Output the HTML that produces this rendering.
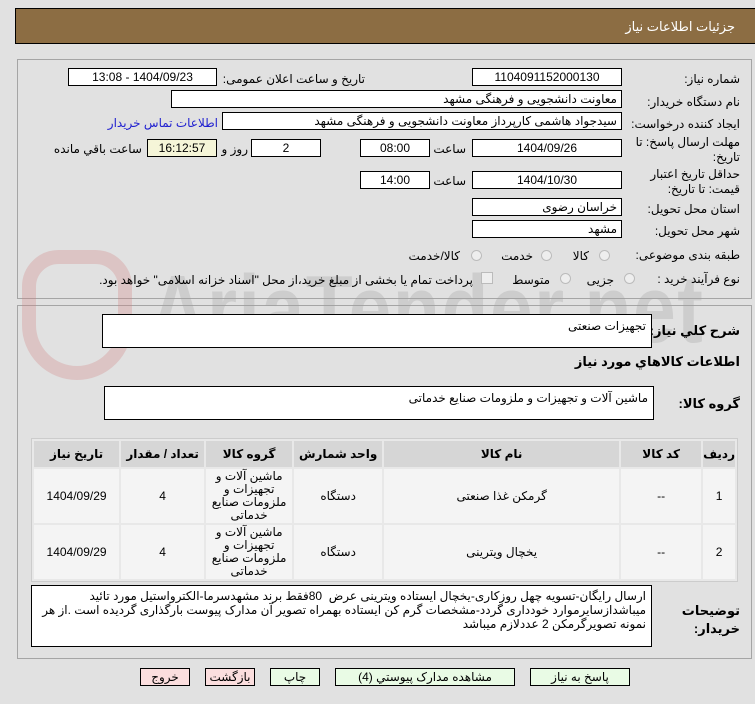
<!DOCTYPE html>
<html><head><meta charset="utf-8">
<style>
*{box-sizing:border-box;margin:0;padding:0}
body{width:755px;height:704px;background:#e1e1e1;font-family:Tahoma,"Liberation Sans","DejaVu Sans",sans-serif;font-size:12px;color:#000;position:relative;overflow:hidden}
.a{position:absolute;white-space:nowrap}
.hdr{left:15px;top:8px;width:745px;height:36px;background:#8c6d43;border:1px solid #000;color:#fff;font-size:13px}
.panel{position:absolute;border:1px solid #a5a5a5;background:#e1e1e1}
.f{position:absolute;background:#fff;border:1px solid #000;height:18px;line-height:16px;padding:0 4px;direction:rtl;text-align:right;white-space:nowrap}
.c{text-align:center}
.l{position:absolute;direction:rtl;text-align:right;white-space:nowrap}
.r{position:absolute;width:11px;height:11px;border-radius:50%;border:1px solid #bbb;background:#eee}
.ta{position:absolute;background:#fff;border:1px solid #000;direction:rtl;text-align:right;padding:3px 5px;line-height:16px}
table{position:absolute;left:31px;top:438px;width:707px;border-collapse:separate;border-spacing:2px;background:#e8e8e8;border:1px solid #ccc;direction:rtl}
th{background:#d6d6d6;height:26px;font-weight:bold;font-size:12px}
td{background:#f4f4f4;height:54px;text-align:center;line-height:13px}
.b{position:absolute;top:668px;height:18px;border:1px solid #000;background:#e9fbe5;text-align:center;line-height:16px;font-size:12px}
.pk{background:#fbdede}
.wm{position:absolute;left:150px;top:255px;font-size:96px;font-weight:bold;color:rgba(160,160,160,0.3);font-family:"Liberation Sans",sans-serif;letter-spacing:2px;transform:scaleX(0.8);transform-origin:left}
</style></head><body>
<div class="a hdr"><span style="position:absolute;right:24px;top:10px">جزئیات اطلاعات نیاز</span></div>

<div class="panel" style="left:17px;top:59px;width:735px;height:240px"></div>
<div class="panel" style="left:17px;top:305px;width:735px;height:354px"></div>

<div class="wm">AriaTender.net</div>
<div style="position:absolute;left:22px;top:250px;width:110px;height:130px;border:14px solid rgba(210,130,130,0.3);border-radius:40px 40px 60px 60px"></div>

<div class="l" style="right:15px;top:72px">شماره نیاز:</div>
<div class="f c" style="left:472px;top:68px;width:150px">1104091152000130</div>
<div class="l" style="right:390px;top:72px">تاریخ و ساعت اعلان عمومی:</div>
<div class="f c" style="left:68px;top:68px;width:149px">1404/09/23 - 13:08</div>

<div class="l" style="right:15px;top:95px">نام دستگاه خریدار:</div>
<div class="f" style="left:171px;top:90px;width:451px">معاونت دانشجویی و فرهنگی مشهد</div>

<div class="l" style="right:15px;top:117px">ایجاد کننده درخواست:</div>
<div class="f" style="left:222px;top:112px;width:400px">سیدجواد هاشمی کارپرداز معاونت دانشجویی و فرهنگی مشهد</div>
<div class="l" style="right:537px;top:116px;color:#2020d0">اطلاعات تماس خریدار</div>

<div class="l" style="right:15px;top:135px;line-height:15px">مهلت ارسال پاسخ: تا<br>تاریخ:</div>
<div class="f c" style="left:472px;top:139px;width:150px">1404/09/26</div>
<div class="l" style="right:289px;top:142px">ساعت</div>
<div class="f c" style="left:360px;top:139px;width:70px">08:00</div>
<div class="f c" style="left:251px;top:139px;width:70px">2</div>
<div class="l" style="right:507px;top:142px">روز و</div>
<div class="f c" style="left:147px;top:139px;width:70px;background:#f5f5d8">16:12:57</div>
<div class="l" style="right:613px;top:142px">ساعت باقي مانده</div>

<div class="l" style="right:15px;top:167px;line-height:15px">حداقل تاریخ اعتبار<br>قیمت: تا تاریخ:</div>
<div class="f c" style="left:472px;top:171px;width:150px">1404/10/30</div>
<div class="l" style="right:289px;top:174px">ساعت</div>
<div class="f c" style="left:360px;top:171px;width:70px">14:00</div>

<div class="l" style="right:15px;top:202px">استان محل تحویل:</div>
<div class="f" style="left:472px;top:198px;width:150px">خراسان رضوی</div>
<div class="l" style="right:15px;top:224px">شهر محل تحویل:</div>
<div class="f" style="left:472px;top:220px;width:150px">مشهد</div>

<div class="l" style="right:15px;top:248px">طبقه بندی موضوعی:</div>
<div class="r" style="left:599px;top:250px"></div><div class="l" style="right:166px;top:249px">کالا</div>
<div class="r" style="left:541px;top:250px"></div><div class="l" style="right:222px;top:249px">خدمت</div>
<div class="r" style="left:471px;top:250px"></div><div class="l" style="right:295px;top:249px">کالا/خدمت</div>

<div class="l" style="right:15px;top:272px">نوع فرآیند خرید :</div>
<div class="r" style="left:624px;top:273px"></div><div class="l" style="right:141px;top:273px">جزیی</div>
<div class="r" style="left:560px;top:273px"></div><div class="l" style="right:205px;top:273px">متوسط</div>
<div style="position:absolute;left:481px;top:272px;width:12px;height:12px;border:1px solid #bbb;background:#eee"></div>
<div class="l" style="right:282px;top:273px">پرداخت تمام یا بخشی از مبلغ خرید،از محل "اسناد خزانه اسلامی" خواهد بود.</div>

<div class="l" style="right:15px;top:323px;font-weight:bold;font-size:13px">شرح کلي نیاز:</div>
<div class="ta" style="left:102px;top:314px;width:550px;height:34px">تجهیزات صنعتی</div>
<div class="l" style="right:15px;top:354px;font-weight:bold;font-size:13px">اطلاعات کالاهاي مورد نیاز</div>
<div class="l" style="right:15px;top:396px;font-weight:bold;font-size:13px">گروه کالا:</div>
<div class="ta" style="left:104px;top:386px;width:550px;height:34px">ماشین آلات و تجهیزات و ملزومات صنایع خدماتی</div>

<table>
<tr><th style="width:27px">ردیف</th><th style="width:80px">کد کالا</th><th style="width:235px">نام کالا</th><th style="width:88px">واحد شمارش</th><th style="width:86px">گروه کالا</th><th style="width:83px">تعداد / مقدار</th><th>تاریخ نیاز</th></tr>
<tr><td>1</td><td>--</td><td>گرمکن غذا صنعتی</td><td>دستگاه</td><td>ماشین آلات و تجهیزات و ملزومات صنایع خدماتی</td><td>4</td><td>1404/09/29</td></tr>
<tr><td>2</td><td>--</td><td>یخچال ویترینی</td><td>دستگاه</td><td>ماشین آلات و تجهیزات و ملزومات صنایع خدماتی</td><td>4</td><td>1404/09/29</td></tr>
</table>

<div class="l" style="right:15px;top:602px;font-weight:bold;font-size:13px;line-height:18px">توضیحات<br>خریدار:</div>
<div class="ta" style="left:31px;top:585px;width:621px;height:62px;line-height:14px;white-space:normal">ارسال رایگان-تسویه چهل روزکاری-یخچال ایستاده ویترینی عرض &nbsp;80فقط برند مشهدسرما-الکترواستیل مورد تائید میباشدازسایرموارد خودداری گردد-مشخصات گرم کن ایستاده بهمراه تصویر آن مدارک پیوست بارگذاری گردیده است .از هر نمونه تصویرگرمکن 2 عددلازم میباشد</div>

<div class="b" style="left:530px;width:100px">پاسخ به نیاز</div>
<div class="b" style="left:335px;width:180px">مشاهده مدارک پیوستي (4)</div>
<div class="b" style="left:270px;width:50px">چاپ</div>
<div class="b pk" style="left:205px;width:50px">بازگشت</div>
<div class="b pk" style="left:140px;width:50px">خروج</div>
</body></html>
